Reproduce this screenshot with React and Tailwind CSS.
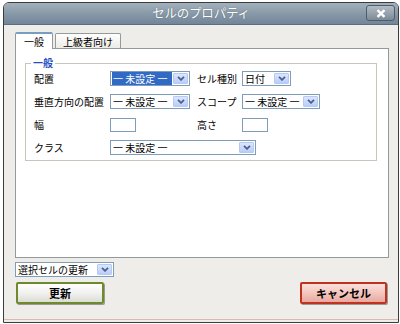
import React from 'react';

const font = { fontFamily: '"Noto Sans CJK JP", "Liberation Sans", sans-serif' };

const Arrow = () => (
  <span className="flex items-center justify-center w-[15px] h-[11px] mr-[1px] rounded-[1px] border border-[#b6c9f5] bg-gradient-to-b from-[#dce6fd] to-[#b9cdf9]">
    <svg width="8" height="5" viewBox="0 0 8 5">
      <path d="M1 0.8 L4 3.8 L7 0.8" fill="none" stroke="#4a5f8c" strokeWidth="1.8" />
    </svg>
  </span>
);

const Select = ({ className, value, hi }) => (
  <div className={`flex items-center h-[15px] border border-[#7f9db9] bg-white ${className}`}>
    <div className="flex-1 flex items-center h-full pl-[1px] pr-[1px] overflow-hidden">
      <span className={`leading-[13px] pl-[1px] whitespace-pre ${hi ? 'flex-1 bg-[#316ac5] text-white' : 'text-black'}`}>
        {value}
      </span>
    </div>
    <Arrow />
  </div>
);

const Input = () => <div className="w-[26px] h-[14px] border border-[#7f9db9] bg-white" />;

export default function App() {
  return (
    <div className="w-[400px] h-[324px] bg-white overflow-hidden pl-[3px] pt-[2px] text-[10px] text-black" style={font}>
      <div className="w-[396px] h-[321px] flex flex-col border border-[#3c3c3c] rounded-t-[6px] bg-[#efedea] overflow-hidden">
        {/* title bar */}
        <div className="relative h-[22px] shrink-0 flex items-center justify-center bg-gradient-to-b from-[#a3b1bd] via-[#8899a7] to-[#72859a] border-b border-[#5c6d7b]">
          <span className="text-white text-[12.5px] tracking-[-0.2px] [text-shadow:0_0_1px_#4a5a66]">セルのプロパティ</span>
          <div className="absolute right-[3px] top-[2px] w-[29px] h-[16px] rounded-[3px] border border-[#4f5e6a] bg-gradient-to-b from-[#b2bcc5] to-[#7d8a96] flex items-center justify-center">
            <svg width="10" height="9" viewBox="0 0 10 9">
              <path d="M1.5 1.2 L8.5 7.8 M8.5 1.2 L1.5 7.8" stroke="#ffffff" strokeWidth="2.4" />
            </svg>
          </div>
        </div>

        {/* body */}
        <div className="flex-1 flex flex-col pl-[11px] pr-[9px] pt-[7px] border-b border-[#d9b8ae] mb-[2px]">
          {/* tabs */}
          <div className="flex items-end h-[16px] gap-[2px] relative z-10">
            <div className="w-[38px] h-[17px] -mb-[1px] flex items-center justify-center bg-white border border-[#919b9c] border-b-0 border-t-2 border-t-[#7a9cc0] rounded-t-[2px]">
              一般
            </div>
            <div className="w-[66px] h-[15px] flex items-center justify-center bg-gradient-to-b from-white to-[#ecebe6] border border-[#919b9c] border-b-0 rounded-t-[2px]">
              上級者向け
            </div>
          </div>

          {/* panel */}
          <div className="h-[210px] bg-white border border-[#919b9c] pl-[9px] pr-[10px] pt-[14px]">
            <div className="relative w-[352px] h-[98px] border border-[#c6c6bd] pl-[8px] pt-[7px] flex flex-col gap-[8px]">
              <span className="absolute -top-[8px] left-[5px] px-[2px] bg-white text-[#1f4fc0] font-bold leading-[14px]">一般</span>
              <div className="flex items-center h-[15px]">
                <span className="w-[76px]">配置</span>
                <Select className="w-[80px]" value="一 未設定 一" hi />
                <span className="w-[45px] ml-[7px]">セル種別</span>
                <Select className="w-[49px]" value="日付" />
              </div>
              <div className="flex items-center h-[15px]">
                <span className="w-[76px]">垂直方向の配置</span>
                <Select className="w-[80px]" value="一 未設定 一" />
                <span className="w-[45px] ml-[7px]">スコープ</span>
                <Select className="w-[78px]" value="一 未設定 一" />
              </div>
              <div className="flex items-center h-[15px]">
                <span className="w-[76px]">幅</span>
                <Input />
                <span className="w-[45px] ml-[61px]">高さ</span>
                <Input />
              </div>
              <div className="flex items-center h-[15px]">
                <span className="w-[76px]">クラス</span>
                <Select className="w-[146px]" value="一 未設定 一" />
              </div>
            </div>
          </div>

          {/* update scope */}
          <Select className="w-[99px] mt-[4px]" value="選択セルの更新" />

          {/* buttons */}
          <div className="flex justify-between mt-[5px] pl-[1px] pr-[2px]">
            <button className="w-[88px] h-[22px] rounded-[2px] border-2 border-[#6e8a2c] bg-gradient-to-b from-white via-[#f1f1ee] to-[#dcdcd6] font-bold text-[11px] shadow-[1px_1px_0_#9a9a90]">
              更新
            </button>
            <button className="w-[87px] h-[22px] rounded-[2px] border-2 border-[#c0321f] bg-gradient-to-b from-[#fbe1dc] via-[#f3c6be] to-[#e7a99f] font-bold text-[11px] shadow-[1px_1px_0_#9a9a90]">
              キャンセル
            </button>
          </div>
        </div>
      </div>
    </div>
  );
}
